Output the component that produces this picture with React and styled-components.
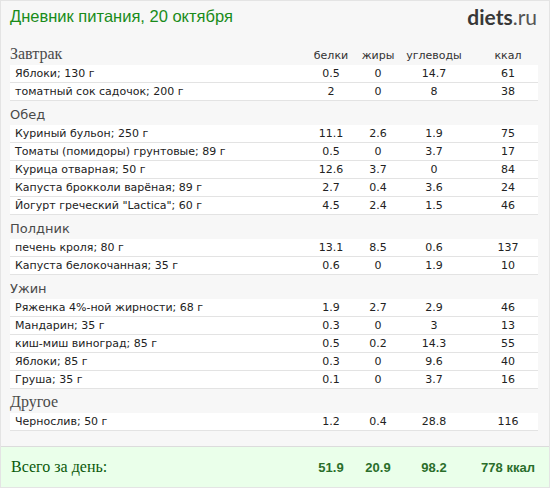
import styled, { createGlobalStyle } from 'styled-components';

const GlobalStyle = createGlobalStyle`
    html, body {
        margin: 0;
        padding: 0;
        background: #f7f7f7;
    }
`;

const COLS = '1fr 50px 44px 68px 70px';

const sections = [
    {
        title: 'Завтрак',
        serif: true,
        labels: true,
        items: [
            ['Яблоки; 130 г', '0.5', '0', '14.7', '61'],
            ['томатный сок садочок; 200 г', '2', '0', '8', '38'],
        ],
    },
    {
        title: 'Обед',
        items: [
            ['Куриный бульон; 250 г', '11.1', '2.6', '1.9', '75'],
            ['Томаты (помидоры) грунтовые; 89 г', '0.5', '0', '3.7', '17'],
            ['Курица отварная; 50 г', '12.6', '3.7', '0', '84'],
            ['Капуста брокколи варёная; 89 г', '2.7', '0.4', '3.6', '24'],
            ['Йогурт греческий "Lactica"; 60 г', '4.5', '2.4', '1.5', '46'],
        ],
    },
    {
        title: 'Полдник',
        items: [
            ['печень кроля; 80 г', '13.1', '8.5', '0.6', '137'],
            ['Капуста белокочанная; 35 г', '0.6', '0', '1.9', '10'],
        ],
    },
    {
        title: 'Ужин',
        items: [
            ['Ряженка 4%-ной жирности; 68 г', '1.9', '2.7', '2.9', '46'],
            ['Мандарин; 35 г', '0.3', '0', '3', '13'],
            ['киш-миш виноград; 85 г', '0.5', '0.2', '14.3', '55'],
            ['Яблоки; 85 г', '0.3', '0', '9.6', '40'],
            ['Груша; 35 г', '0.1', '0', '3.7', '16'],
        ],
    },
    {
        title: 'Другое',
        serif: true,
        items: [['Чернослив; 50 г', '1.2', '0.4', '28.8', '116']],
    },
];

const Page = styled.div`
    box-sizing: border-box;
    width: 550px;
    height: 488px;
    border: 1px solid #e4e4e4;
    background: #f7f7f7;
    display: flex;
    flex-direction: column;
`;

const Header = styled.div`
    height: 30px;
    margin-bottom: 10px;
    padding: 0 12px 0 9px;
    display: flex;
    align-items: center;
    justify-content: space-between;
`;

const Title = styled.h1`
    margin: 0;
    font-family: 'Liberation Sans', Arial, sans-serif;
    font-weight: normal;
    font-size: 16.5px;
    color: #1a8c1a;
`;

const Logo = styled.div`
    font-family: Lato, 'Open Sans', sans-serif;
    font-size: 21px;
    color: #555;
    b {
        color: #383838;
        font-weight: bold;
    }
`;

const Body = styled.div`
    padding: 0 11px 0 9px;
`;

const SectionHead = styled.div`
    display: grid;
    grid-template-columns: ${COLS};
    align-items: center;
    height: 24px;
`;

const SectionTitle = styled.div`
    padding-top: 2px;
    font-family: ${p => (p.$serif ? "'Liberation Serif', serif" : "'DejaVu Sans', Verdana, sans-serif")};
    font-size: ${p => (p.$serif ? '16px' : '13px')};
    color: #4a4a4a;
`;

const Label = styled.div`
    padding-top: 4px;
    padding-left: ${p => (p.$pad ? '10px' : '0')};
    text-align: center;
    font-family: 'DejaVu Sans', Verdana, sans-serif;
    font-size: 11px;
    color: #333;
`;

const Row = styled.div`
    display: grid;
    grid-template-columns: ${COLS};
    height: 17px;
    line-height: 17px;
    background: #fff;
    border-bottom: 1px solid #e3e3e3;
    font-family: 'DejaVu Sans', Verdana, sans-serif;
    font-size: 11px;
    color: #222;
`;

const Name = styled.div`
    padding-left: 5px;
    white-space: nowrap;
`;

const Cell = styled.div`
    text-align: center;
    padding-left: ${p => (p.$pad ? '10px' : '0')};
`;

const Footer = styled.div`
    margin-top: 15px;
    height: 40px;
    border-top: 1px solid #dcdcdc;
    background: #eaffea;
    padding: 0 11px 0 9px;
    display: grid;
    grid-template-columns: ${COLS};
    align-items: center;
`;

const TotalLabel = styled.div`
    padding-left: 1px;
    font-family: 'Liberation Serif', serif;
    font-size: 16px;
    color: #0b5a0b;
`;

const Total = styled.div`
    text-align: center;
    padding-left: ${p => (p.$pad ? '10px' : '0')};
    font-family: 'Liberation Sans', Arial, sans-serif;
    font-weight: bold;
    font-size: 13px;
    color: #2a6e2a;
`;

const App = () => {
    return (
        <>
            <GlobalStyle />
            <Page>
                <Header>
                    <Title>Дневник питания, 20 октября</Title>
                    <Logo>
                        <b>diets</b>.ru
                    </Logo>
                </Header>
                <Body>
                    {sections.map(section => (
                        <div key={section.title}>
                            <SectionHead>
                                <SectionTitle $serif={section.serif}>{section.title}</SectionTitle>
                                {section.labels && (
                                    <>
                                        <Label>белки</Label>
                                        <Label>жиры</Label>
                                        <Label>углеводы</Label>
                                        <Label $pad>ккал</Label>
                                    </>
                                )}
                            </SectionHead>
                            {section.items.map(([name, p, f, c, k]) => (
                                <Row key={name}>
                                    <Name>{name}</Name>
                                    <Cell>{p}</Cell>
                                    <Cell>{f}</Cell>
                                    <Cell>{c}</Cell>
                                    <Cell $pad>{k}</Cell>
                                </Row>
                            ))}
                        </div>
                    ))}
                </Body>
                <Footer>
                    <TotalLabel>Всего за день:</TotalLabel>
                    <Total>51.9</Total>
                    <Total>20.9</Total>
                    <Total>98.2</Total>
                    <Total $pad>778 ккал</Total>
                </Footer>
            </Page>
        </>
    );
};

export default App;
